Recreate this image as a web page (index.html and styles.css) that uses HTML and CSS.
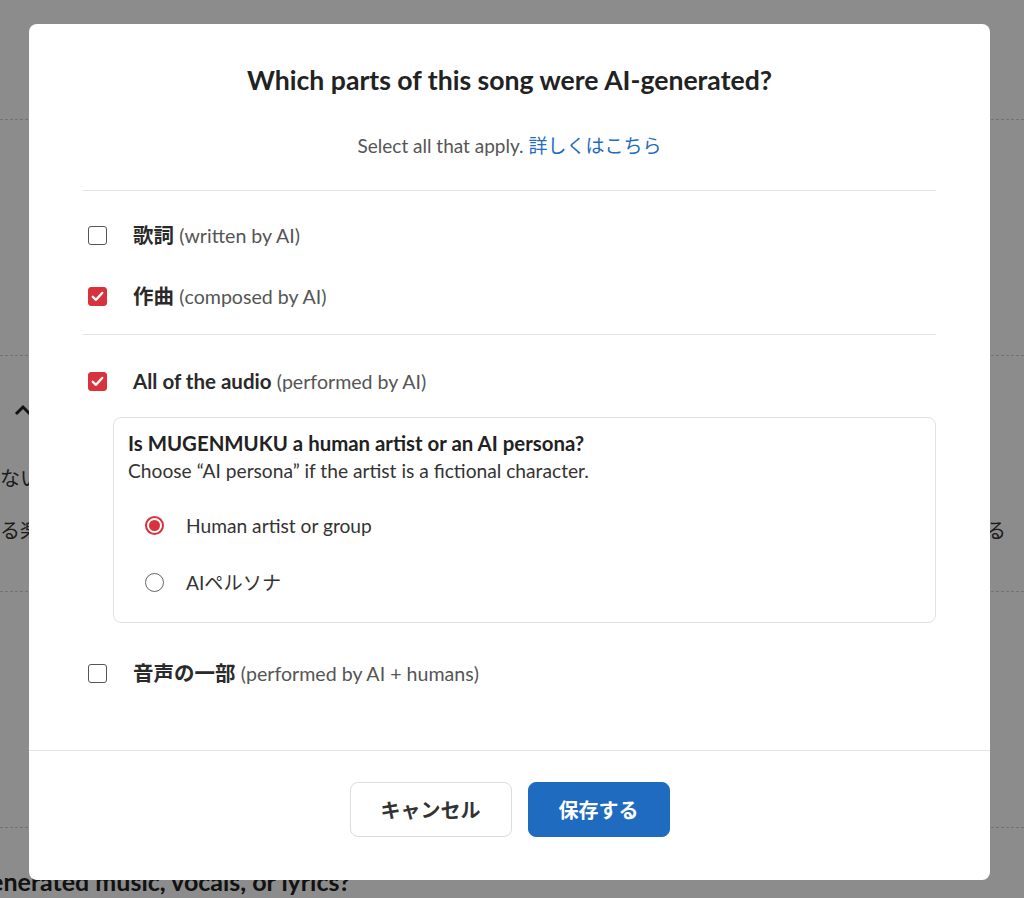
FILE: index.html
```html
<!DOCTYPE html>
<html lang="ja">
<head>
<meta charset="utf-8">
<title>AI-generated parts</title>
<link rel="stylesheet" href="styles.css">
</head>
<body>
<div class="page">
  <div class="bg-sec bg-top"></div>
  <div class="bg-sec"></div>
  <div class="bg-sec bg-mid">
    <div class="chev">
      <svg width="18" height="12" viewBox="0 0 18 12"><path d="M2 10 L9 3 L16 10" fill="none" stroke="#222" stroke-width="3"/></svg>
    </div>
    <p class="bg-line">ない。</p>
    <p class="bg-line bg-split"><span>る楽</span><span>る</span></p>
  </div>
  <div class="bg-sec"></div>
  <p class="bg-q">AI-generated music, vocals, or lyrics?</p>
</div>

<div class="overlay">
  <div class="modal">
    <div class="modal-body">
      <div class="head">
        <h2 class="title">Which parts of this song were AI-generated?</h2>
        <p class="sub">Select all that apply. <a class="link" href="#">詳しくはこちら</a></p>
      </div>

      <div class="group">
        <div class="opt">
          <span class="cb"></span>
          <span class="lbl"><b>歌詞</b> <span class="hint">(written by AI)</span></span>
        </div>
        <div class="opt">
          <span class="cb on"><svg width="13" height="11" viewBox="0 0 13 11"><path d="M1.8 5.8 L5 8.8 L11.2 2" fill="none" stroke="#fff" stroke-width="2.4" stroke-linecap="round" stroke-linejoin="round"/></svg></span>
          <span class="lbl"><b>作曲</b> <span class="hint">(composed by AI)</span></span>
        </div>
      </div>

      <div class="group group2">
        <div class="opt">
          <span class="cb on"><svg width="13" height="11" viewBox="0 0 13 11"><path d="M1.8 5.8 L5 8.8 L11.2 2" fill="none" stroke="#fff" stroke-width="2.4" stroke-linecap="round" stroke-linejoin="round"/></svg></span>
          <span class="lbl"><b>All of the audio</b> <span class="hint">(performed by AI)</span></span>
        </div>
        <div class="sub-box">
          <p class="q">Is MUGENMUKU a human artist or an AI persona?</p>
          <p class="qhint">Choose “AI persona” if the artist is a fictional character.</p>
          <div class="radios">
            <div class="radio-row"><span class="rd on"><span class="dot"></span></span><span class="rlbl">Human artist or group</span></div>
            <div class="radio-row"><span class="rd"></span><span class="rlbl">AIペルソナ</span></div>
          </div>
        </div>
        <div class="opt last">
          <span class="cb"></span>
          <span class="lbl"><b>音声の一部</b> <span class="hint">(performed by AI + humans)</span></span>
        </div>
      </div>
    </div>
    <div class="foot">
      <button class="btn btn-cancel">キャンセル</button>
      <button class="btn btn-save">保存する</button>
    </div>
  </div>
</div>
</body>
</html>
```

FILE: styles.css
```css
* { box-sizing: border-box; }
html, body { margin: 0; padding: 0; }
body {
  width: 1024px;
  height: 898px;
  overflow: hidden;
  background: #fff;
  font-family: Lato, "Noto Sans CJK JP", sans-serif;
  color: #222;
}

/* background page */
.page { width: 1024px; }
.bg-sec { height: 236px; border-bottom: 1px dashed #cfcfcf; }
.bg-top { height: 120px; }
.chev { padding: 44px 0 0 14px; height: 60px; }
.bg-line {
  margin: 0;
  font-size: 20px;
  line-height: 26px;
  white-space: nowrap;
  color: #333;
}
.bg-line + .bg-line { margin-top: 26px; }
.chev + .bg-line { margin-top: 49px; }
.bg-split { display: flex; justify-content: space-between; padding-right: 18px; }
.bg-q {
  margin: 38px 0 0 -57px;
  font-size: 25px;
  font-weight: 700;
  white-space: nowrap;
  color: #222;
}

/* overlay & modal */
.overlay {
  position: fixed;
  inset: 0;
  background: rgba(0, 0, 0, 0.45);
  padding: 24px 0 0 29px;
}
.modal {
  width: 961px;
  background: #fff;
  border-radius: 8px;
}
.modal-body { padding: 0 54px; }
.head {
  padding-top: 41px;
  padding-bottom: 31px;
  border-bottom: 1px solid #e3e3e3;
  text-align: center;
}
.title {
  margin: 0;
  font-size: 26.6px;
  line-height: 30px;
  font-weight: 700;
  color: #222;
}
.sub {
  margin: 38px 0 0;
  font-size: 19px;
  line-height: 26px;
  color: #555;
}
.link { color: #1f6cbf; text-decoration: none; }

.group { padding: 31px 0 25px; border-bottom: 1px solid #e3e3e3; }
.group2 { border-bottom: 0; padding: 33px 0 64px; }
.opt {
  display: flex;
  align-items: center;
  height: 26px;
  padding-left: 5px;
}
.opt + .opt { margin-top: 35px; }
.cb {
  flex: none;
  width: 19px;
  height: 19px;
  border: 1.5px solid #555;
  border-radius: 3px;
  display: flex;
  align-items: center;
  justify-content: center;
  background: #fff;
}
.cb.on { background: #d8323d; border-color: #d8323d; }
.lbl {
  margin-left: 26px;
  font-size: 20.5px;
  line-height: 26px;
  color: #333;
  white-space: nowrap;
}
.lbl b { font-weight: 700; color: #2a2a2a; }
.hint { color: #555; font-weight: 400; font-size: 19.6px; }

.sub-box {
  margin: 23px 0 0 30px;
  border: 1px solid #dfe0e8;
  border-radius: 8px;
  padding: 12px 14px 27px;
}
.q, .qhint {
  margin: 0;
  font-size: 19px;
  line-height: 27px;
  color: #222;
}
.q { font-weight: 700; font-size: 20.4px; }
.qhint { color: #333; font-size: 19.2px; }
.radios { margin-top: 28px; padding-left: 17px; }
.radio-row { display: flex; align-items: center; height: 26px; }
.radio-row + .radio-row { margin-top: 31px; }
.rd {
  flex: none;
  width: 19px;
  height: 19px;
  border-radius: 50%;
  border: 1.5px solid #666;
  display: flex;
  align-items: center;
  justify-content: center;
}
.rd.on { border-color: #d8323d; border-width: 2px; }
.dot { width: 11px; height: 11px; border-radius: 50%; background: #d8323d; }
.rlbl { margin-left: 22px; font-size: 19.2px; color: #333; }
.opt.last { margin-top: 37px; }

.foot {
  border-top: 1px solid #e3e3e3;
  padding: 31px 0 43px;
  display: flex;
  justify-content: center;
  gap: 16px;
}
.btn {
  height: 55px;
  padding: 0 30px;
  border-radius: 8px;
  font-family: Lato, "Noto Sans CJK JP", sans-serif;
  font-size: 20px;
  font-weight: 700;
  cursor: pointer;
}
.btn-cancel { background: #fff; border: 1px solid #dcdcdc; color: #333; }
.btn-save { background: #1f6bbf; border: 1px solid #1f6bbf; color: #fff; }
```
